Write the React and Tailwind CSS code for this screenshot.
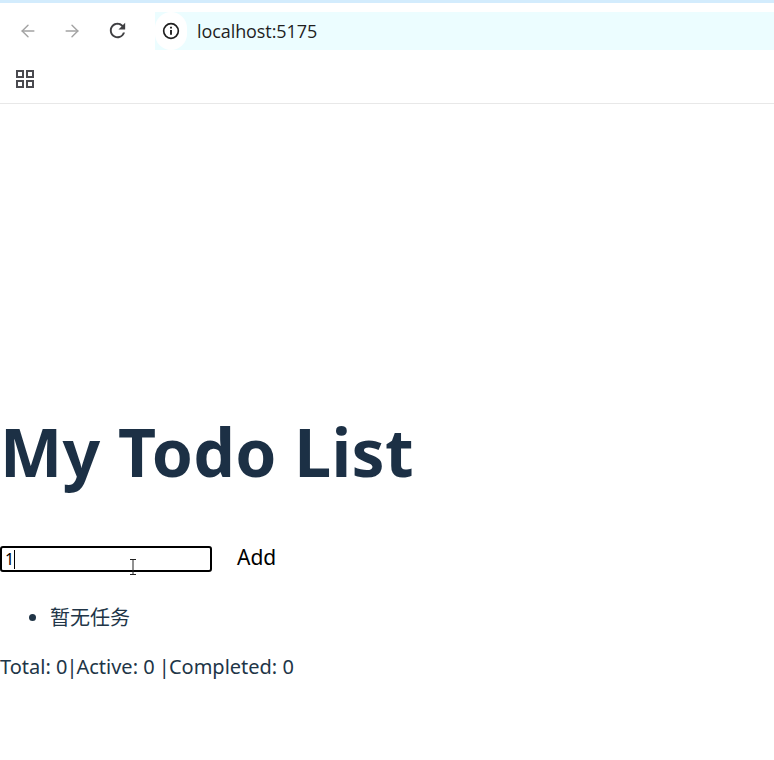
import { ArrowLeft, ArrowRight } from 'lucide-react'

const InfoIcon = () => (
  <svg width="20" height="20" viewBox="0 0 18 18" fill="none" stroke="#1f1f1f" strokeWidth="1.5">
    <circle cx="9" cy="9" r="6.6"/>
    <line x1="9" y1="8.2" x2="9" y2="12.4" strokeWidth="1.7"/>
    <line x1="9" y1="5.2" x2="9" y2="6.8" strokeWidth="1.7"/>
  </svg>
)

const ReloadIcon = () => (
  <svg width="23" height="23" viewBox="0 0 24 24" fill="#3f3f42">
    <path d="M17.65 6.35A7.958 7.958 0 0 0 12 4c-4.42 0-7.99 3.58-7.99 8s3.57 8 7.99 8c3.73 0 6.84-2.55 7.73-6h-2.08A5.99 5.99 0 0 1 12 18c-3.31 0-6-2.69-6-6s2.69-6 6-6c1.66 0 3.14.69 4.22 1.78L13 11h7V4l-2.35 2.35z"/>
  </svg>
)

const AppsIcon = () => (
  <svg width="20" height="20" viewBox="0 0 20 20" fill="none" stroke="#4a4a4f" strokeWidth="2">
    <rect x="2" y="2" width="6" height="6"/>
    <rect x="12" y="2" width="6" height="6"/>
    <rect x="2" y="12" width="6" height="6"/>
    <rect x="12" y="12" width="6" height="6"/>
  </svg>
)

const TextCursor = () => (
  <svg className="absolute left-[126px] top-[11px]" width="10" height="16" viewBox="0 0 10 16" fill="none" stroke="#222" strokeWidth="1">
    <path d="M2 .5h6M5 .5v15M2 15.5h6"/>
  </svg>
)

export default function App() {
  return (
    <div className="w-[774px] h-[760px] overflow-hidden bg-white font-['Noto_Sans','Noto_Sans_CJK_SC',sans-serif] text-[#213547]">

      {/* Browser chrome */}
      <div className="h-[104px] border-b border-[#e8e8e8] border-t-[3px] border-t-[#d3ecfd]">
        <div className="flex items-start h-[47px] pt-[9px]">
          <div className="flex items-center w-[155px] h-[38px] pl-[18px]">
            <ArrowLeft size={20} strokeWidth={1.7} color="#a3a3a3" />
            <ArrowRight size={20} strokeWidth={1.7} color="#a3a3a3" className="ml-[24px]" />
            <span className="ml-[24px] -mt-px"><ReloadIcon /></span>
          </div>
          <div className="flex-1 h-[38px] bg-[#ecfdff] flex items-center">
            <div className="w-[32px] h-[38px] rounded-full bg-white flex items-center justify-center">
              <InfoIcon />
            </div>
            <span className="ml-[10px] text-[18px] text-[#1f1f1f] tracking-[-0.08px] font-['Open_Sans',sans-serif]">localhost:5175</span>
          </div>
        </div>
        <div className="pl-[15px] pt-[19px]">
          <AppsIcon />
        </div>
      </div>

      {/* Page */}
      <h1 className="mt-[311px] text-[66px] leading-[72px] font-bold tracking-[0.3px] text-[#1c3045]">My Todo List</h1>

      <div className="mt-[59px] flex items-center">
        <div className="relative w-[212px] h-[26px] border-2 border-black rounded-[3px] flex items-center pl-[3px] text-[16px] leading-none text-black">
          1<span className="w-px h-[19px] bg-black" />
          <TextCursor />
        </div>
        <span className="ml-[25px] -mt-[4px] text-[21px] leading-[26px] text-black">Add</span>
      </div>

      <ul className="mt-[32px] ml-[50px] list-disc text-[20px] leading-[28px]">
        <li>暂无任务</li>
      </ul>

      <p className="mt-[21px] text-[20px] leading-[28px] whitespace-pre">
        Total: 0<span className="-mx-[1px]">|</span>Active: 0 <span className="-mx-[1px]">|</span>Completed: 0
      </p>
    </div>
  )
}
